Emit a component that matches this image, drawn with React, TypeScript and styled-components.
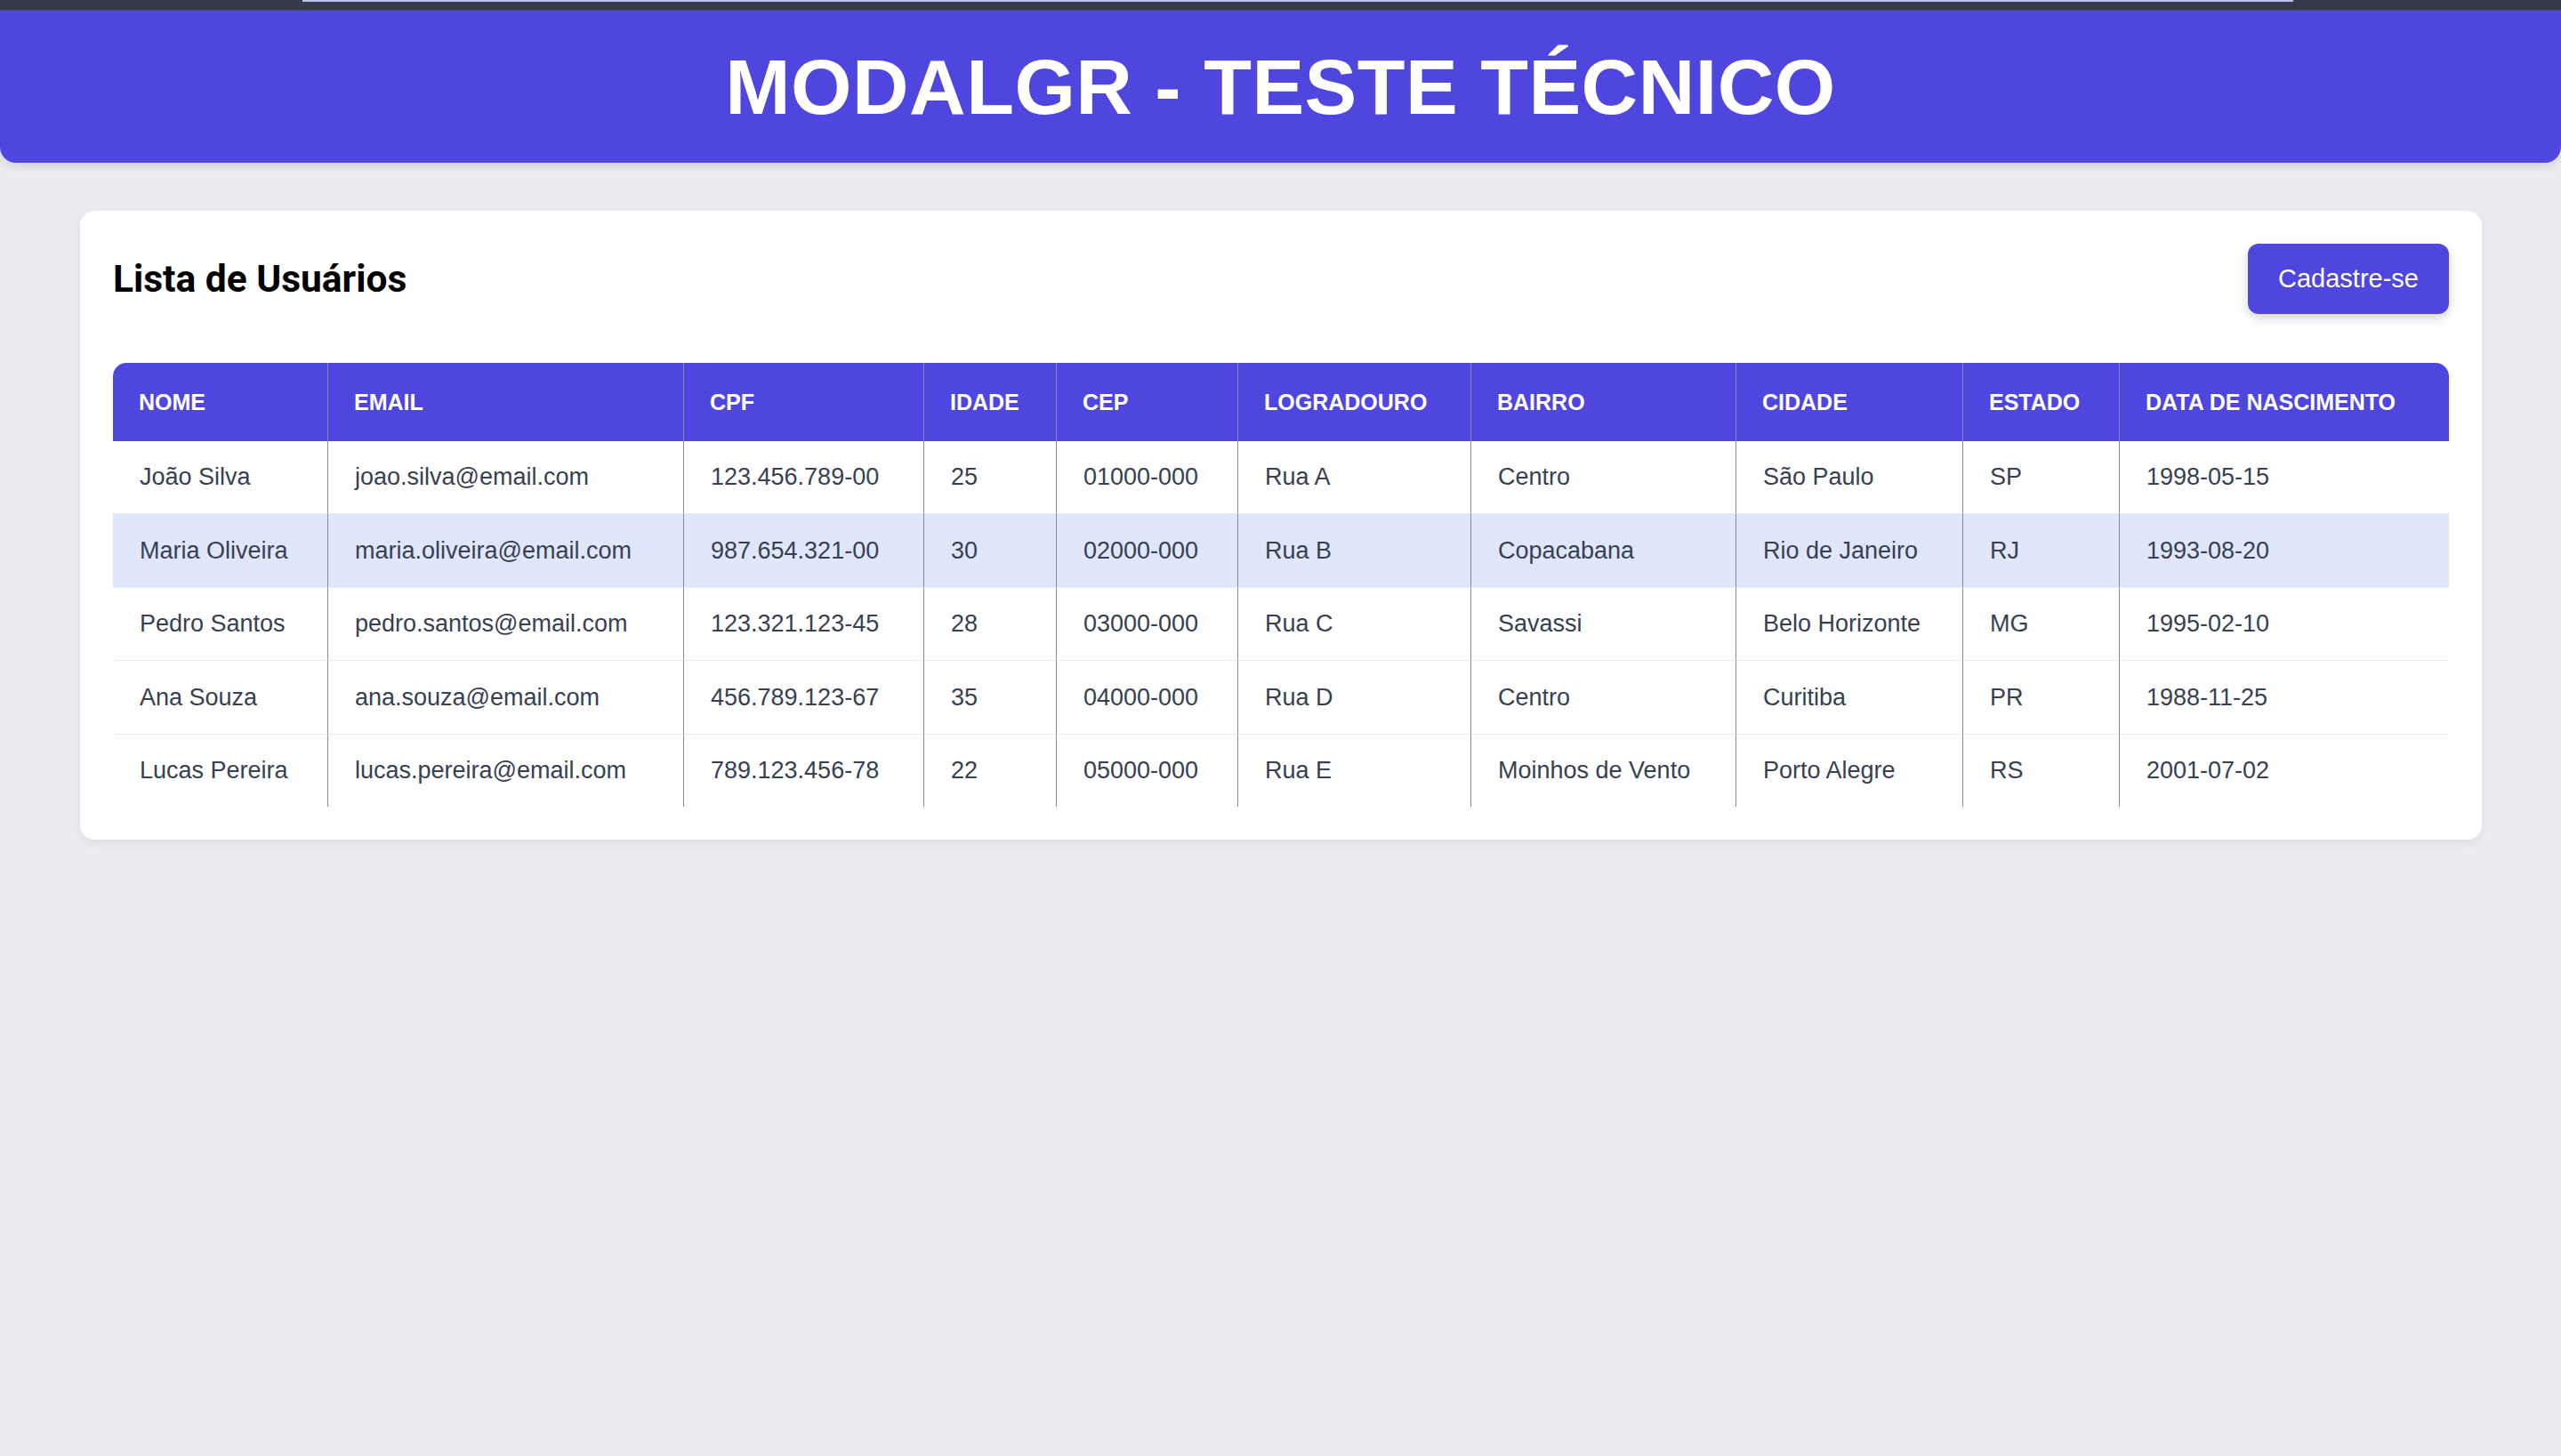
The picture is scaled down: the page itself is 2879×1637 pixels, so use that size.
import React from "react";
import styled, { createGlobalStyle } from "styled-components";

const GlobalStyle = createGlobalStyle`
  html, body {
    margin: 0;
    padding: 0;
    background: #ecedf1;
    font-family: "Liberation Sans", Arial, sans-serif;
  }
  * { box-sizing: border-box; }
`;

const Page = styled.div`
  min-height: 1637px;
  display: flex;
  flex-direction: column;
`;

const BrowserStrip = styled.div`
  height: 12px;
  background: #363b4c;
  border-bottom: 1px solid #4a4f5c;
  display: flex;
`;

const StripLine = styled.div`
  margin-left: 340px;
  width: 2238px;
  height: 2px;
  background: #b7c4ee;
`;

const Header = styled.header`
  height: 171px;
  background: #4e46df;
  border-radius: 0 0 18px 18px;
  box-shadow: 0 4px 12px rgba(0, 0, 0, 0.12);
  display: flex;
  align-items: center;
  justify-content: center;
`;

const HeaderTitle = styled.h1`
  margin: 0;
  color: #ffffff;
  font-family: "Liberation Sans", Arial, sans-serif;
  font-weight: 700;
  font-size: 88px;
  letter-spacing: 0.5px;
  text-transform: uppercase;
  line-height: 1;
`;

const Main = styled.main`
  padding: 54px 89px 0 90px;
`;

const Card = styled.section`
  background: #ffffff;
  border-radius: 16px;
  padding: 37px;
  box-shadow: 0 4px 14px rgba(0, 0, 0, 0.07);
`;

const CardHeader = styled.div`
  display: flex;
  align-items: center;
  justify-content: space-between;
  margin-bottom: 55px;
`;

const CardTitle = styled.h2`
  margin: 0;
  font-family: Roboto, "Liberation Sans", sans-serif;
  font-weight: 700;
  font-size: 42.5px;
  color: #000000;
  line-height: 1.2;
`;

const PrimaryButton = styled.button`
  border: none;
  background: #4e46df;
  color: #ffffff;
  font-family: "Liberation Sans", Arial, sans-serif;
  font-size: 29px;
  line-height: 33px;
  padding: 23px 34px;
  border-radius: 12px;
  box-shadow: 0 5px 12px rgba(0, 0, 0, 0.16);
  cursor: pointer;
`;

const TableWrap = styled.div`
  border-radius: 15px 15px 0 0;
  overflow: hidden;
`;

const Table = styled.table`
  width: 100%;
  table-layout: fixed;
  border-collapse: separate;
  border-spacing: 0;
`;

const Col = styled.col<{ $w?: number }>`
  width: ${(p) => (p.$w ? `${p.$w}px` : "auto")};
`;

const HeadCell = styled.th`
  background: #4e46df;
  color: #ffffff;
  font-weight: 700;
  font-size: 25px;
  line-height: 29px;
  text-align: left;
  text-transform: uppercase;
  padding: 29.5px 29px;
  white-space: nowrap;
  border-right: 1px solid #8b8b9a;
  &:last-child { border-right: none; }
`;

const Row = styled.tr<{ $highlight?: boolean }>`
  background: ${(p) => (p.$highlight ? "#e0e7fb" : "#ffffff")};
`;

const Cell = styled.td`
  color: #374151;
  font-size: 27px;
  line-height: 31px;
  padding: 25.3px 29px 25.2px 30px;
  white-space: nowrap;
  border-right: 1px solid #8a8a8a;
  border-bottom: 1px solid #e5e7eb;
  &:last-child { border-right: none; }
  tr:last-child > & { border-bottom: none; }
`;

const columns = [
  { key: "nome", label: "Nome", w: 242 },
  { key: "email", label: "Email", w: 400 },
  { key: "cpf", label: "CPF", w: 270 },
  { key: "idade", label: "Idade", w: 149 },
  { key: "cep", label: "CEP", w: 204 },
  { key: "logradouro", label: "Logradouro", w: 262 },
  { key: "bairro", label: "Bairro", w: 298 },
  { key: "cidade", label: "Cidade", w: 255 },
  { key: "estado", label: "Estado", w: 176 },
  { key: "nascimento", label: "Data de Nascimento" },
] as const;

type User = Record<(typeof columns)[number]["key"], string>;

const users: User[] = [
  { nome: "João Silva", email: "joao.silva@email.com", cpf: "123.456.789-00", idade: "25", cep: "01000-000", logradouro: "Rua A", bairro: "Centro", cidade: "São Paulo", estado: "SP", nascimento: "1998-05-15" },
  { nome: "Maria Oliveira", email: "maria.oliveira@email.com", cpf: "987.654.321-00", idade: "30", cep: "02000-000", logradouro: "Rua B", bairro: "Copacabana", cidade: "Rio de Janeiro", estado: "RJ", nascimento: "1993-08-20" },
  { nome: "Pedro Santos", email: "pedro.santos@email.com", cpf: "123.321.123-45", idade: "28", cep: "03000-000", logradouro: "Rua C", bairro: "Savassi", cidade: "Belo Horizonte", estado: "MG", nascimento: "1995-02-10" },
  { nome: "Ana Souza", email: "ana.souza@email.com", cpf: "456.789.123-67", idade: "35", cep: "04000-000", logradouro: "Rua D", bairro: "Centro", cidade: "Curitiba", estado: "PR", nascimento: "1988-11-25" },
  { nome: "Lucas Pereira", email: "lucas.pereira@email.com", cpf: "789.123.456-78", idade: "22", cep: "05000-000", logradouro: "Rua E", bairro: "Moinhos de Vento", cidade: "Porto Alegre", estado: "RS", nascimento: "2001-07-02" },
];

export default function App() {
  return (
    <Page>
      <GlobalStyle />
      <BrowserStrip>
        <StripLine />
      </BrowserStrip>
      <Header>
        <HeaderTitle>ModalGR - Teste Técnico</HeaderTitle>
      </Header>
      <Main>
        <Card>
          <CardHeader>
            <CardTitle>Lista de Usuários</CardTitle>
            <PrimaryButton>Cadastre-se</PrimaryButton>
          </CardHeader>
          <TableWrap>
            <Table>
              <colgroup>
                {columns.map((c) => (
                  <Col key={c.key} $w={"w" in c ? c.w : undefined} />
                ))}
              </colgroup>
              <thead>
                <tr>
                  {columns.map((c) => (
                    <HeadCell key={c.key}>{c.label}</HeadCell>
                  ))}
                </tr>
              </thead>
              <tbody>
                {users.map((u, i) => (
                  <Row key={u.cpf} $highlight={i === 1}>
                    {columns.map((c) => (
                      <Cell key={c.key}>{u[c.key]}</Cell>
                    ))}
                  </Row>
                ))}
              </tbody>
            </Table>
          </TableWrap>
        </Card>
      </Main>
    </Page>
  );
}
